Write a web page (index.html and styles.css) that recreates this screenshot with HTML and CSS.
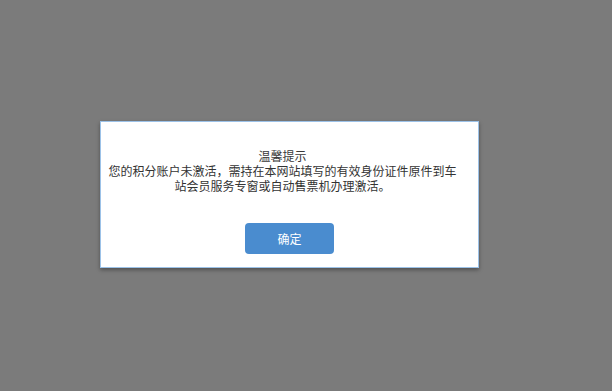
FILE: index.html
```html
<!DOCTYPE html>
<html lang="zh-CN">
<head>
<meta charset="utf-8">
<title>温馨提示</title>
<link rel="stylesheet" href="styles.css">
</head>
<body>
<div class="overlay">
  <div class="dialog">
    <div class="dialog-body">
      <div class="dialog-title">温馨提示</div>
      <p class="dialog-text">您的积分账户未激活，需持在本网站填写的有效身份证件原件到车站会员服务专窗或自动售票机办理激活。</p>
    </div>
    <div class="dialog-actions">
      <button class="btn-confirm" type="button">确定</button>
    </div>
  </div>
</div>
</body>
</html>
```

FILE: styles.css
```css
html, body {
  margin: 0;
  padding: 0;
  height: 100%;
}
body {
  background: #7b7b7b;
  font-family: "Noto Sans CJK SC", "Noto Sans", sans-serif;
}
.overlay {
  width: 612px;
  height: 391px;
  padding-top: 121px;
  padding-left: 100px;
  box-sizing: border-box;
}
.dialog {
  width: 379px;
  height: 147px;
  box-sizing: border-box;
  background: #ffffff;
  border: 1px solid #9cc2e8;
  box-shadow: 0 2px 4px rgba(0, 0, 0, 0.35);
  display: flex;
  flex-direction: column;
}
.dialog-body {
  padding: 26px 20px 0 6px;
  text-align: center;
  color: #333333;
}
.dialog-title {
  font-size: 12px;
  line-height: 15px;
  color: #3a3a3a;
}
.dialog-text {
  margin: 0;
  font-size: 12px;
  line-height: 15px;
  color: #333333;
}
.dialog-actions {
  display: flex;
  justify-content: center;
  padding-top: 30px;
}
.btn-confirm {
  width: 89px;
  height: 31px;
  border: none;
  border-radius: 4px;
  background: #4a8ccf;
  color: #ffffff;
  font-family: "Noto Sans CJK SC", "Noto Sans", sans-serif;
  font-size: 12px;
  padding: 0;
}
```
